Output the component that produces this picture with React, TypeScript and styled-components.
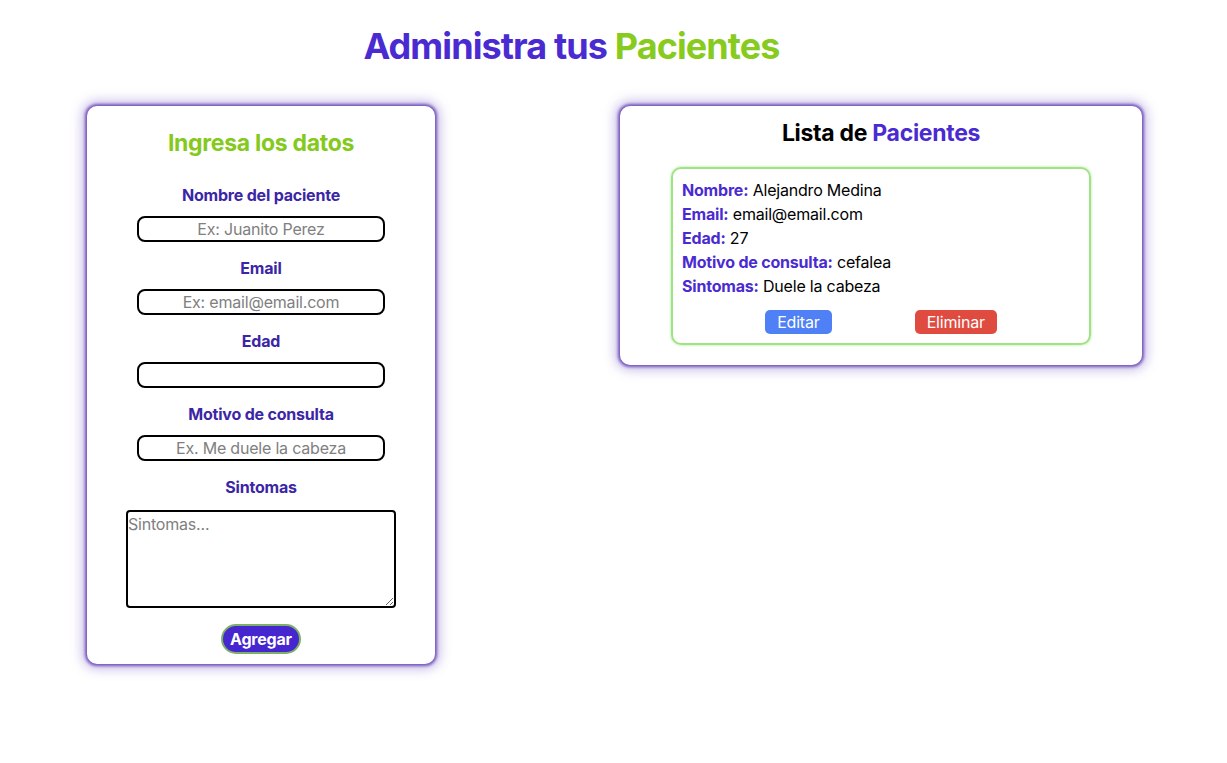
import React from 'react';
import styled, { createGlobalStyle } from 'styled-components';

const GlobalStyle = createGlobalStyle`
  * { box-sizing: border-box; }
  body {
    margin: 0;
    background: #ffffff;
    font-family: Inter, "Noto Sans", "Liberation Sans", sans-serif;
    color: #000;
    letter-spacing: -0.2px;
  }
`;

const Page = styled.div`
  padding: 24px 85px 40px 87px;
`;

const Heading = styled.h1`
  margin: 0 86px 0 0;
  text-align: center;
  font-size: 36px;
  line-height: 44px;
  font-weight: 700;
  color: #4a2bd1;
  letter-spacing: -0.9px;
`;

const Accent = styled.span<{ $color: string }>`
  color: ${(p) => p.$color};
`;

const Row = styled.div`
  display: flex;
  justify-content: space-between;
  align-items: flex-start;
  margin-top: 38px;
`;

const Card = styled.div<{ $width: number }>`
  width: ${(p) => p.$width}px;
  background: #fff;
  border-radius: 10px;
  box-shadow: 0 0 3px 2px rgba(100, 66, 180, 0.85), 0 0 12px 5px rgba(120, 90, 200, 0.4);
`;

const FormCard = styled(Card)`
  display: flex;
  flex-direction: column;
  align-items: center;
  padding: 21px 0 10px;
`;

const FormTitle = styled.h2`
  margin: 0 0 24px;
  font-size: 23px;
  line-height: 32px;
  font-weight: 700;
  color: #84c91c;
  letter-spacing: -0.3px;
`;

const Label = styled.label<{ $gap?: number }>`
  font-size: 16px;
  line-height: 24px;
  font-weight: 700;
  color: #3b26a6;
  margin-bottom: ${(p) => p.$gap ?? 9}px;
`;

const Input = styled.input`
  width: 248px;
  height: 26px;
  border: 2px solid #000;
  border-radius: 8px;
  text-align: center;
  font-family: inherit;
  font-size: 16px;
  letter-spacing: -0.2px;
  margin-bottom: 14px;
  padding: 0 6px;
  &::placeholder { color: #808080; }
`;

const TextArea = styled.textarea`
  width: 270px;
  height: 98px;
  border: 2px solid #000;
  border-radius: 4px;
  font-family: inherit;
  font-size: 16px;
  letter-spacing: -0.2px;
  padding: 2px 0;
  margin-bottom: 16px;
  &::placeholder { color: #808080; }
`;

const SubmitButton = styled.button`
  height: 30px;
  padding: 0 7px;
  border-radius: 15px;
  border: 2px solid #7fb06a;
  background: #4526cf;
  color: #fff;
  font-family: inherit;
  font-size: 16px;
  font-weight: 700;
  letter-spacing: -0.2px;
`;

const ListCard = styled(Card)`
  padding: 13px 51px 20px;
`;

const ListTitle = styled.h2`
  margin: 0 0 20px;
  text-align: center;
  font-size: 23px;
  line-height: 28px;
  font-weight: 700;
  color: #000;
  letter-spacing: -0.3px;
`;

const PatientCard = styled.div`
  border: 2px solid #9fe383;
  border-radius: 10px;
  box-shadow: 0 0 3px rgba(140, 220, 110, 0.7);
  padding: 9px;
`;

const Field = styled.p`
  margin: 0;
  font-size: 16px;
  line-height: 24px;
  color: #000;
`;

const FieldName = styled.span`
  font-weight: 700;
  color: #4a2bd1;
`;

const Actions = styled.div`
  display: flex;
  justify-content: space-evenly;
  margin-top: 12px;
`;

const ActionButton = styled.button<{ $bg: string }>`
  height: 24px;
  padding: 0 12px;
  border: none;
  border-radius: 5px;
  background: ${(p) => p.$bg};
  color: #fff;
  font-family: inherit;
  font-size: 16px;
  letter-spacing: -0.2px;
`;

const fields: [string, string][] = [
  ['Nombre', 'Alejandro Medina'],
  ['Email', 'email@email.com'],
  ['Edad', '27'],
  ['Motivo de consulta', 'cefalea'],
  ['Sintomas', 'Duele la cabeza'],
];

export default function App() {
  return (
    <>
      <GlobalStyle />
      <Page>
        <Heading>
          Administra tus <Accent $color="#88cb1f">Pacientes</Accent>
        </Heading>
        <Row>
          <FormCard $width={348}>
            <FormTitle>Ingresa los datos</FormTitle>
            <Label>Nombre del paciente</Label>
            <Input placeholder="Ex: Juanito Perez" />
            <Label>Email</Label>
            <Input placeholder="Ex: email@email.com" />
            <Label>Edad</Label>
            <Input />
            <Label>Motivo de consulta</Label>
            <Input placeholder="Ex. Me duele la cabeza" />
            <Label $gap={11}>Sintomas</Label>
            <TextArea placeholder="Sintomas..." />
            <SubmitButton>Agregar</SubmitButton>
          </FormCard>
          <ListCard $width={522}>
            <ListTitle>
              Lista de <Accent $color="#4a2bd1">Pacientes</Accent>
            </ListTitle>
            <PatientCard>
              {fields.map(([k, v]) => (
                <Field key={k}>
                  <FieldName>{k}:</FieldName> {v}
                </Field>
              ))}
              <Actions>
                <ActionButton $bg="#4f80f6">Editar</ActionButton>
                <ActionButton $bg="#df4b3f">Eliminar</ActionButton>
              </Actions>
            </PatientCard>
          </ListCard>
        </Row>
      </Page>
    </>
  );
}
